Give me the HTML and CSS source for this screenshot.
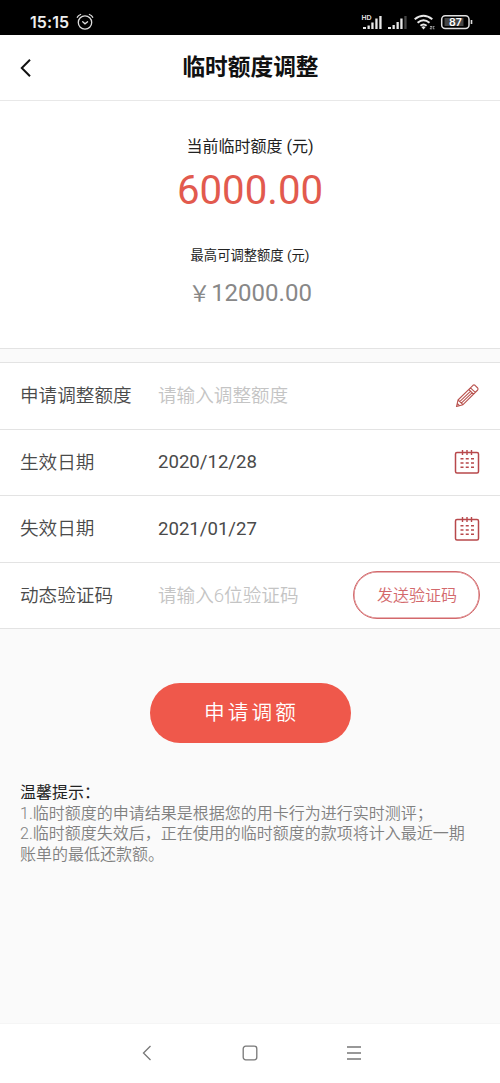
FILE: index.html
```html
<!DOCTYPE html>
<html lang="zh-CN">
<head>
<meta charset="utf-8">
<title>临时额度调整</title>
<link rel="stylesheet" href="styles.css">
</head>
<body>
<div class="status">
  <div class="status-left">
    <span class="clock">15:15</span>
    <svg width="18" height="18" viewBox="0 0 18 18" fill="none" stroke="#ddd" stroke-width="1.3" stroke-linecap="round"><circle cx="9" cy="9.5" r="6.7"/><path d="M6.7 8.8L9 10.8l2.6-2M1.3 4.3Q2.2 2.2 4.6 1.5M16.7 4.3Q15.8 2.2 13.4 1.5"/></svg>
  </div>
  <svg class="status-right" width="114" height="20" viewBox="0 0 114 20">
    <text class="hd" x="1.500" y="8.500">HD</text>
    <g fill="#e8e8e8"><path d="M3 16h3v2H3zM7.500 14.500h2.300V18H7.500zM11.300 11.500h2.300V18h-2.300zM15.300 7.500h2.300V18h-2.300zM19.300 5h2.300v13h-2.300zM28 16h3v2h-3zM32.500 14h2.300v4h-2.300zM36.500 11h2.300v7h-2.300zM40.300 7.500h2.300V18h-2.300z"/><path fill="#454545" d="M44.300 5h2.300v13h-2.300z"/></g>
    <g transform="translate(1 0)">
      <path fill="none" stroke="#e8e8e8" stroke-width="2" d="M53.700 8.300Q62.500 1.300 71.300 8.300M56.600 11.800Q62.500 6.800 68.500 11.800M59.500 14.800Q62.500 12.200 65.600 14.800"/>
      <path fill="#e8e8e8" d="M60.500 16.200Q62.500 14.300 64.500 16.200L62.500 18.500z"/>
      <path d="M69 15.500h2l-2 2.300h2M73.500 15.500h-1.300v2.300h1.300" stroke="#bbb" stroke-width=".8" fill="none"/>
      <rect x="80.700" y="4.700" width="27.300" height="12.700" rx="3.500" fill="none" stroke="#e0e0e0" stroke-width="1.500"/>
      <rect x="83.500" y="7" width="19" height="8" fill="#454545"/>
      <path d="M110.500 9v4" stroke="#ddd" stroke-width="1.600"/>
      <text class="battery" x="94.500" y="15" text-anchor="middle">87</text>
    </g>
  </svg>
</div>
<header class="header">
  <svg class="back" width="12" height="20" viewBox="0 0 12 20"><path d="M10 1.800L1.800 10l8.200 8.200" fill="none" stroke="#111" stroke-width="2"/></svg>
  <h1 class="title">临时额度调整</h1>
</header>
<section class="summary">
  <div class="current-label">当前临时额度 (元)</div>
  <div class="current">6000.00</div>
  <div class="max-label">最高可调整额度 (元)</div>
  <div class="max"><span class="yen">￥</span>12000.00</div>
</section>
<div class="gap"></div>
<main class="form">
  <div class="row">
    <span class="label">申请调整额度</span><span class="hint">请输入调整额度</span>
    <svg class="icon" width="26" height="26" viewBox="0 0 26 26" fill="none" stroke="#b9534f" stroke-width="1.100" stroke-linejoin="round"><path d="M2.500 23.500L4 17 19 2.300Q20 1.500 21 2.300L23.700 5Q24.500 6 23.700 7L9 21.700zM4 17l5 4.700M16.500 4.800l5 4.800M14.800 6.500l5 4.800M5.700 18.700L17 7.800M7.300 20.200L18.500 9.400M2.500 23.500l3-.8-2-2z"/></svg>
  </div>
  <div class="row">
    <span class="label">生效日期</span><span class="value">2020/12/28</span>
    <svg class="icon" width="26" height="26" viewBox="0 0 26 26" fill="none" stroke="#b8484b"><rect x="1.500" y="3.500" width="23" height="20.500" rx="1.500" stroke-width="1.500"/><path d="M8.500 1v5M13 1v5M17.500 1v5" stroke-width="1.400"/><path d="M6.500 9.800h13.500M6.500 14h13.500M6.500 18.200h13.500" stroke-width="1.500" stroke-dasharray="3 2.250"/></svg>
  </div>
  <div class="row">
    <span class="label">失效日期</span><span class="value">2021/01/27</span>
    <svg class="icon" width="26" height="26" viewBox="0 0 26 26" fill="none" stroke="#b8484b"><rect x="1.500" y="3.500" width="23" height="20.500" rx="1.500" stroke-width="1.500"/><path d="M8.500 1v5M13 1v5M17.500 1v5" stroke-width="1.400"/><path d="M6.500 9.800h13.500M6.500 14h13.500M6.500 18.200h13.500" stroke-width="1.500" stroke-dasharray="3 2.250"/></svg>
  </div>
  <div class="row">
    <span class="label">动态验证码</span><span class="hint">请输入6位验证码</span>
    <button class="send">发送验证码</button>
  </div>
</main>
<button class="submit">申请调额</button>
<section class="tips">
  <div class="tips-title">温馨提示：</div>
  <div>1.临时额度的申请结果是根据您的用卡行为进行实时测评；</div>
  <div>2.临时额度失效后，正在使用的临时额度的款项将计入最近一期<br>账单的最低还款额。</div>
</section>
<nav class="nav">
  <svg width="16" height="16" viewBox="0 0 16 16"><path d="M12.500 1L5.500 8l7 7"/></svg>
  <svg width="16" height="16" viewBox="0 0 16 16"><rect x="1.200" y="1.200" width="13.600" height="13.600" rx="2.500"/></svg>
  <svg width="16" height="16" viewBox="0 0 16 16"><path d="M1 2h14M1 8h14M1 14h14"/></svg>
</nav>
</body>
</html>
```

FILE: styles.css
```css
* { box-sizing: border-box; }
body {
  margin: 0;
  height: 1083px;
  display: flex;
  flex-direction: column;
  background: #fafafa;
  color: #222;
  font-family: Roboto, "Noto Sans CJK SC", sans-serif;
}
button { font-family: inherit; padding: 0; }
.status {
  height: 35px;
  flex: none;
  display: flex;
  justify-content: space-between;
  padding: 11px 26px 0 30px;
  background: #000;
}
.status-left { display: flex; gap: 7px; height: 22px; }
.clock { color: #eee; font: 600 16px/22px Inter, sans-serif; letter-spacing: 0.1px; }
.status-left svg { margin-top: 2px; }
.hd { font: 700 7px "Liberation Sans", sans-serif; fill: #ddd; }
.battery { font: 600 10.500px Inter, sans-serif; fill: #fff; }
.header {
  height: 66px;
  flex: none;
  display: grid;
  grid-template-columns: 40px 1fr 40px;
  align-items: center;
  background: #fff;
  border-bottom: 1px solid #e8e8e8;
}
.back { margin: 0 0 0 19.500px; }
.title { margin: 1px 0 0 1px; text-align: center; font-size: 22.700px; line-height: 30px; font-weight: 700; color: #111; }
.summary {
  height: 247px;
  flex: none;
  padding-top: 34px;
  background: #fff;
  text-align: center;
}
.current-label { font-size: 16px; line-height: 24px; }
.current { margin-top: 7px; font-size: 40.200px; line-height: 50px; color: #e25a4e; }
.max-label { margin-top: 30px; font-size: 13.300px; line-height: 20px; }
.max { margin-top: 11px; font-size: 24px; line-height: 32px; color: #888; }
.yen { display: inline-block; width: 23px; font-size: 22px; }
.gap { height: 14px; flex: none; border-top: 1px solid #e3e3e3; }
.form { flex: none; background: #fff; border-top: 1px solid #e3e3e3; }
.row {
  height: 66.500px;
  display: grid;
  grid-template-columns: 138px 1fr auto;
  align-items: center;
  padding: 0 20px;
  border-bottom: 1px solid #e3e3e3;
  font-size: 18.600px;
  line-height: 28px;
  color: #4a4a4a;
}
.label { padding-top: 1px; font-weight: 350; }
.hint { padding-top: 1px; color: #c4c4c4; font-weight: 350; }
.send {
  width: 127px;
  height: 48px;
  border: 1px solid #d3696c;
  box-shadow: inset 0 0 0 0.500px #d3696c;
  border-radius: 24px;
  background: #fff;
  color: #d3696c;
  font-size: 16px;
  font-weight: 350;
  padding: 0 0 2px 1px;
}
.submit {
  flex: none;
  align-self: center;
  width: 201px;
  height: 60px;
  margin-top: 54px;
  border: 0;
  border-radius: 30px;
  background: #ef584b;
  color: #fff;
  font-size: 20.700px;
  font-weight: 350;
  letter-spacing: 3px;
  padding: 0 0 4px 3px;
}
.tips { margin: 40px 20px 0; font-size: 16px; line-height: 20.500px; color: #808080; font-weight: 350; white-space: nowrap; }
.tips-title { color: #222; font-weight: 400; }
.nav {
  height: 60px;
  flex: none;
  margin-top: auto;
  padding-bottom: 2px;
  display: flex;
  justify-content: center;
  align-items: center;
  gap: 88px;
  background: #fff;
  border-top: 1px solid #f5f5f5;
}
.nav svg { fill: none; stroke: #777; stroke-width: 1.300; }
```
